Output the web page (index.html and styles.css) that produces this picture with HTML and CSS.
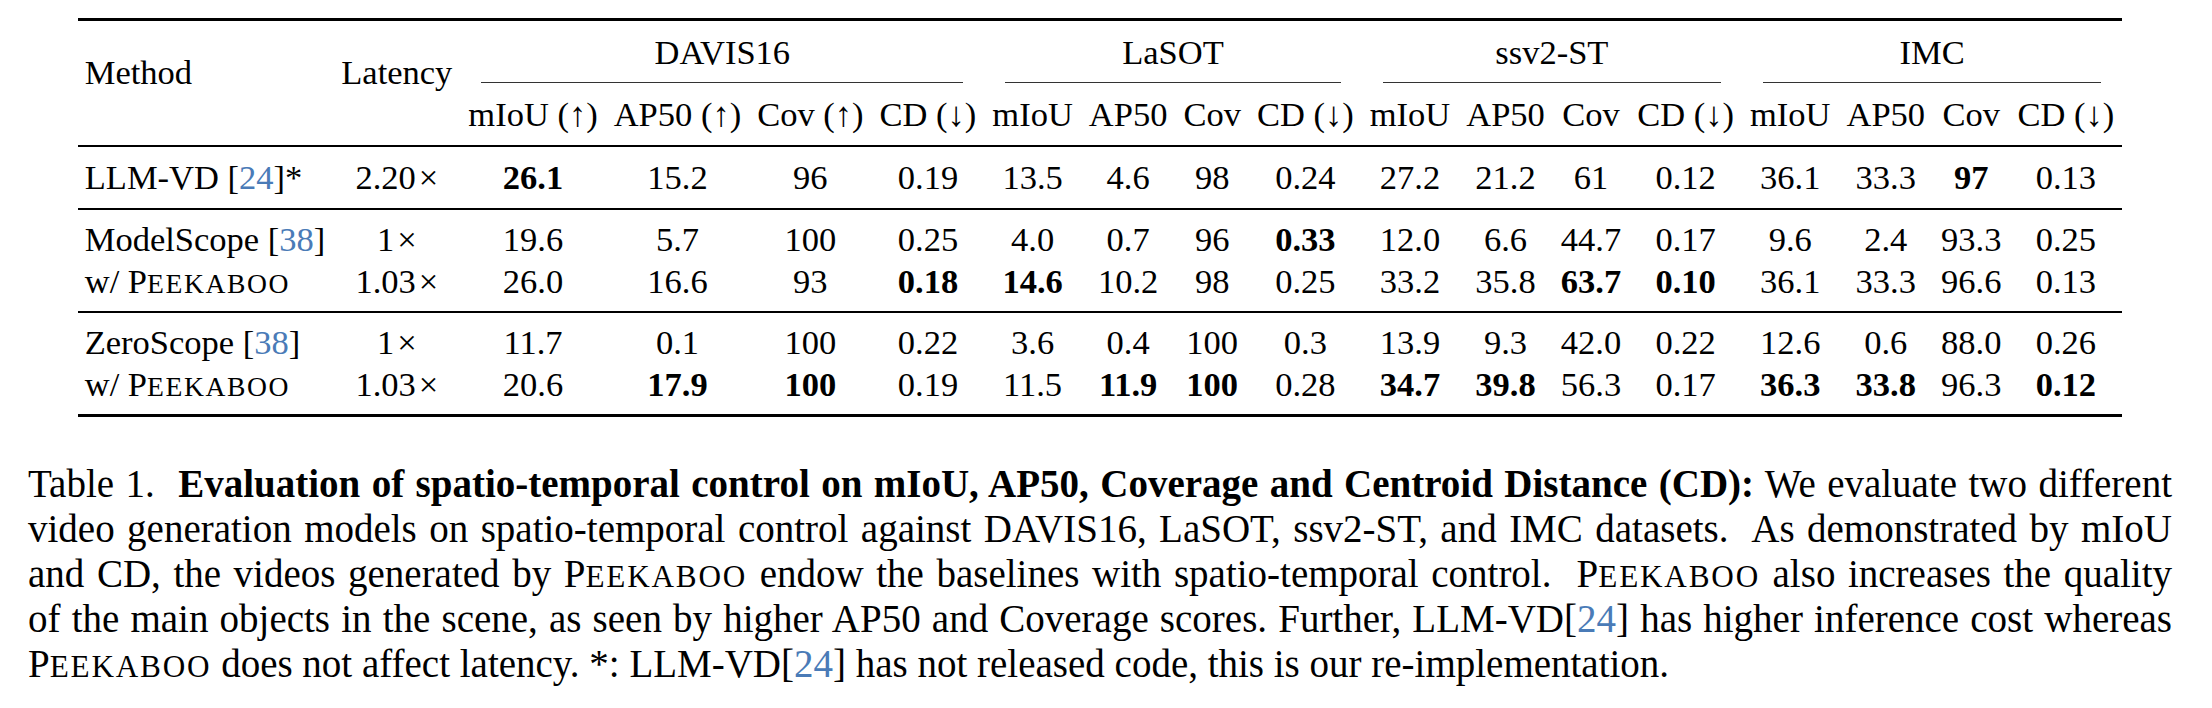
FILE: index.html
```html
<!DOCTYPE html>
<html lang="en">
<head>
<meta charset="utf-8">
<title>Table 1</title>
<link rel="stylesheet" href="styles.css">
</head>
<body>
<div class="page">
  <table class="results">
    <thead>
      <tr class="hrow1">
        <th rowspan="2" class="method">Method</th>
        <th rowspan="2" class="lat">Latency</th>
        <th colspan="4" class="grp"><div>DAVIS16</div></th>
        <th colspan="4" class="grp"><div>LaSOT</div></th>
        <th colspan="4" class="grp"><div>ssv2-ST</div></th>
        <th colspan="4" class="grp"><div>IMC</div></th>
      </tr>
      <tr class="hrow2">
        <th>mIoU (↑)</th><th>AP50 (↑)</th><th>Cov (↑)</th><th>CD (↓)</th>
        <th>mIoU</th><th>AP50</th><th>Cov</th><th>CD (↓)</th>
        <th>mIoU</th><th>AP50</th><th>Cov</th><th>CD (↓)</th>
        <th>mIoU</th><th>AP50</th><th>Cov</th><th>CD (↓)</th>
      </tr>
    </thead>
    <tbody class="single">
      <tr>
        <td class="method">LLM-VD [<span class="ref">24</span>]*</td>
        <td>2.20<span class="x">×</span></td>
        <td><b>26.1</b></td><td>15.2</td><td>96</td><td>0.19</td>
        <td>13.5</td><td>4.6</td><td>98</td><td>0.24</td>
        <td>27.2</td><td>21.2</td><td>61</td><td>0.12</td>
        <td>36.1</td><td>33.3</td><td><b>97</b></td><td>0.13</td>
      </tr>
    </tbody>
    <tbody class="pair">
      <tr>
        <td class="method">ModelScope [<span class="ref">38</span>]</td>
        <td>1<span class="x">×</span></td>
        <td>19.6</td><td>5.7</td><td>100</td><td>0.25</td>
        <td>4.0</td><td>0.7</td><td>96</td><td><b>0.33</b></td>
        <td>12.0</td><td>6.6</td><td>44.7</td><td>0.17</td>
        <td>9.6</td><td>2.4</td><td>93.3</td><td>0.25</td>
      </tr>
      <tr>
        <td class="method">w/ <span class="sc">P<span class="scl">eekaboo</span></span></td>
        <td>1.03<span class="x">×</span></td>
        <td>26.0</td><td>16.6</td><td>93</td><td><b>0.18</b></td>
        <td><b>14.6</b></td><td>10.2</td><td>98</td><td>0.25</td>
        <td>33.2</td><td>35.8</td><td><b>63.7</b></td><td><b>0.10</b></td>
        <td>36.1</td><td>33.3</td><td>96.6</td><td>0.13</td>
      </tr>
    </tbody>
    <tbody class="pair">
      <tr>
        <td class="method">ZeroScope [<span class="ref">38</span>]</td>
        <td>1<span class="x">×</span></td>
        <td>11.7</td><td>0.1</td><td>100</td><td>0.22</td>
        <td>3.6</td><td>0.4</td><td>100</td><td>0.3</td>
        <td>13.9</td><td>9.3</td><td>42.0</td><td>0.22</td>
        <td>12.6</td><td>0.6</td><td>88.0</td><td>0.26</td>
      </tr>
      <tr>
        <td class="method">w/ <span class="sc">P<span class="scl">eekaboo</span></span></td>
        <td>1.03<span class="x">×</span></td>
        <td>20.6</td><td><b>17.9</b></td><td><b>100</b></td><td>0.19</td>
        <td>11.5</td><td><b>11.9</b></td><td><b>100</b></td><td>0.28</td>
        <td><b>34.7</b></td><td><b>39.8</b></td><td>56.3</td><td>0.17</td>
        <td><b>36.3</b></td><td><b>33.8</b></td><td>96.3</td><td><b>0.12</b></td>
      </tr>
    </tbody>
  </table>

  <div class="caption">
    <div class="cline"><span class="lbl">Table 1.</span> <b>Evaluation of spatio-temporal control on mIoU, AP50, Coverage and Centroid Distance (CD):</b> We evaluate two different</div>
    <div class="cline">video generation models on spatio-temporal control against DAVIS16, LaSOT, ssv2-ST, and IMC datasets.&nbsp; As demonstrated by mIoU</div>
    <div class="cline">and CD, the videos generated by <span class="sc">P<span class="scl">eekaboo</span></span> endow the baselines with spatio-temporal control.&nbsp; <span class="sc">P<span class="scl">eekaboo</span></span> also increases the quality</div>
    <div class="cline">of the main objects in the scene, as seen by higher AP50 and Coverage scores. Further, LLM-VD[<span class="ref">24</span>] has higher inference cost whereas</div>
    <div class="cline last"><span class="sc">P<span class="scl">eekaboo</span></span> does not affect latency. *: LLM-VD[<span class="ref">24</span>] has not released code, this is our re-implementation.</div>
  </div>
</div>
</body>
</html>
```

FILE: styles.css
```css
html, body {
  margin: 0;
  padding: 0;
  background: #ffffff;
}

body {
  font-family: "Liberation Serif", "Times New Roman", serif;
  color: #000000;
}

.page {
  width: 2144px;
  margin-left: 28px;
  padding-top: 18px;
}

/* ---------- table ---------- */
.results {
  border-collapse: collapse;
  margin: 0 auto;
  font-family: "Liberation Serif", "Times New Roman", serif;
  font-size: 34.5px;
  line-height: 42px;
}

.results th,
.results td {
  padding: 0 8px;
  font-family: "Liberation Serif", "Times New Roman", serif;
  font-weight: normal;
  text-align: center;
  white-space: nowrap;
  vertical-align: top;
}

.results b {
  font-weight: bold;
}

.results .method {
  text-align: left;
  padding-left: 7px;
}

.results thead {
  border-top: 3px solid #000;
  border-bottom: 2px solid #000;
}

.results tbody {
  border-bottom: 2px solid #000;
}

.results tbody:last-child {
  border-bottom: 3px solid #000;
}

.hrow1 th.method,
.hrow1 th.lat {
  padding-top: 30px;
}

.hrow1 th.grp {
  padding: 10px 21px 0;
}

.hrow1 th.grp div {
  padding-bottom: 9px;
  border-bottom: 1px solid #333;
}

.hrow2 th {
  padding-top: 10px;
  padding-bottom: 10px;
}

.single td {
  padding-top: 9px;
  padding-bottom: 10px;
}

.pair tr:first-child td {
  padding-top: 8px;
}

.pair tr:last-child td {
  padding-bottom: 9px;
}

.x {
  margin-left: 3px;
}

.ref {
  color: #4a7bb7;
}

/* small caps: initial capital, the rest as reduced capitals */
.scl {
  text-transform: uppercase;
  font-size: 0.8em;
  line-height: 1;
  letter-spacing: 0.058em;
}

/* ---------- caption ---------- */
.caption {
  margin-top: 44px;
  font-size: 39px;
  line-height: 45px;
}

.cline {
  text-align: justify;
  text-align-last: justify;
  white-space: nowrap;
}

.cline.last {
  text-align: left;
  text-align-last: left;
}

.lbl {
  margin-right: 12px;
}
```
